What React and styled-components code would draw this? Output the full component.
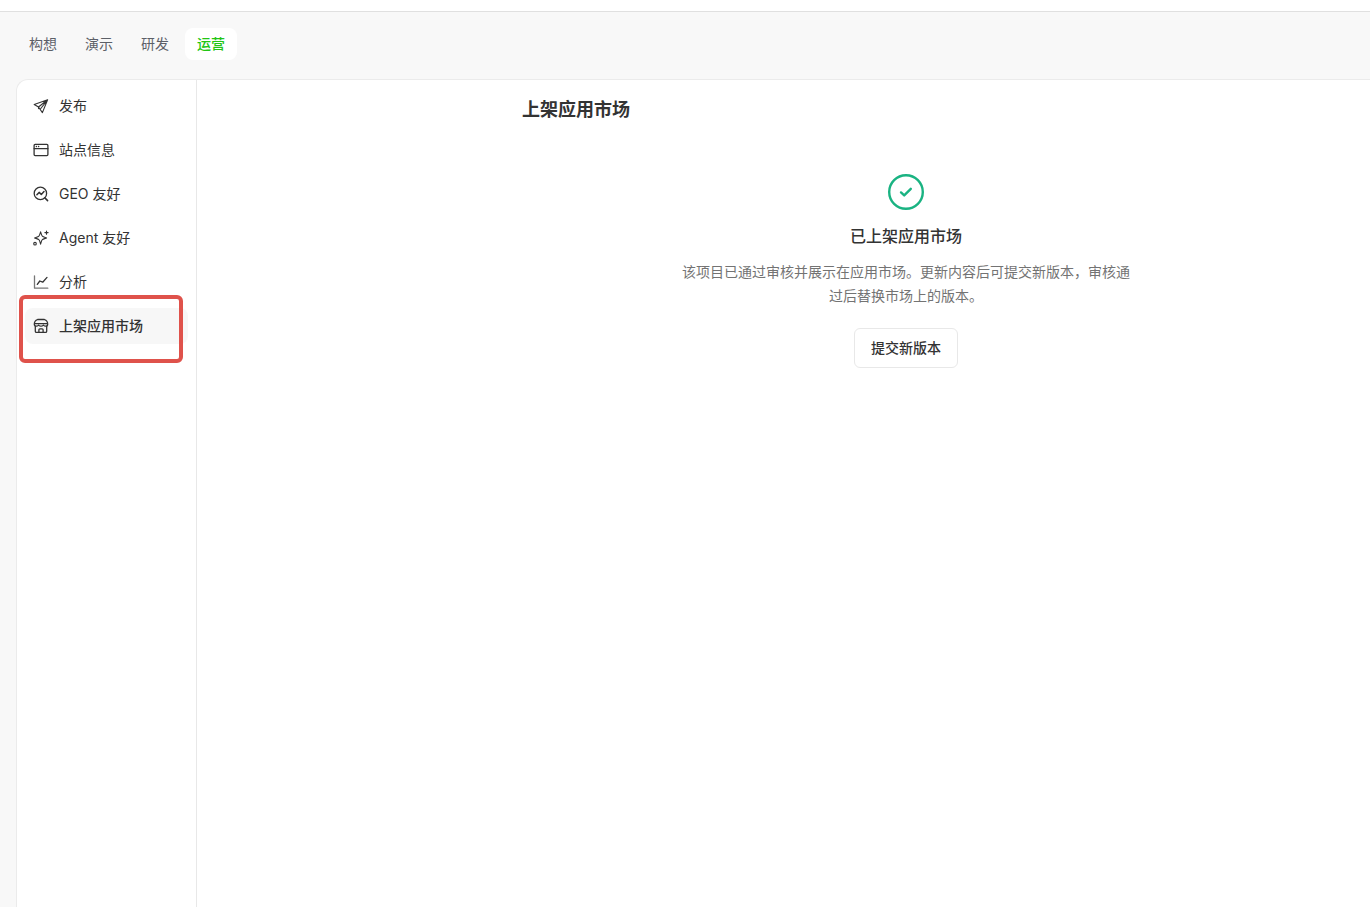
import React from 'react';
import styled, { createGlobalStyle } from 'styled-components';

const GlobalStyle = createGlobalStyle`
    * {
        box-sizing: border-box;
    }

    body {
        margin: 0;
        background: #f8f8f8;
        color: #333;
        font-family: Inter, "Noto Sans CJK SC", sans-serif;
        font-size: 14px;
        line-height: 20px;
    }
`

const Page = styled.div`
    min-height: 100vh;
    display: flex;
    flex-direction: column;
`

const TopBar = styled.header`
    height: 12px;
    background: #fff;
    border-bottom: 1px solid #e0e0e0;
`

const Tabs = styled.nav`
    display: flex;
    gap: 4px;
    padding: 16px 17px 19px;
`

const Tab = styled.button`
    height: 32px;
    padding: 0 12px;
    border: none;
    border-radius: 8px;
    background: ${props => props.$active ? '#fff' : 'none'};
    color: ${props => props.$active ? '#22c514' : '#5c6068'};
    font: inherit;
    font-weight: ${props => props.$active ? 500 : 400};
`

const Panel = styled.div`
    flex: 1;
    display: flex;
    margin-left: 16px;
    background: #fff;
    border: 1px solid #ebebeb;
    border-width: 1px 0 0 1px;
    border-top-left-radius: 12px;
`

const Sidebar = styled.nav`
    width: 180px;
    flex-shrink: 0;
    display: flex;
    flex-direction: column;
    gap: 8px;
    padding: 8px;
    border-right: 1px solid #e8e8e8;
`

const MenuItem = styled.a`
    position: relative;
    display: flex;
    align-items: center;
    gap: 10px;
    height: 36px;
    padding: 0 8px;
    border-radius: 8px;
    background: ${props => props.$active ? '#f7f7f7' : 'none'};
    color: #333;
    font-weight: ${props => props.$active ? 500 : 400};
    text-decoration: none;
`

const Highlight = styled.span`
    position: absolute;
    top: -13px;
    right: 5px;
    bottom: -19px;
    left: -6px;
    border: 4px solid #df524b;
    border-radius: 6px;
    pointer-events: none;
`

const Icon = styled.svg`
    width: 16px;
    height: 16px;
    flex-shrink: 0;
    fill: none;
    stroke: #333;
    stroke-width: 1.3;
    stroke-linecap: round;
    stroke-linejoin: round;
`

const Main = styled.main`
    flex: 1;
    padding: 16px 0 16px 245px;
`

const Content = styled.section`
    max-width: 768px;
    margin: 0 auto;
`

const Title = styled.h1`
    margin: 0;
    font-size: 18px;
    font-weight: 600;
    line-height: 28px;
`

const Status = styled.div`
    display: flex;
    flex-direction: column;
    align-items: center;
    padding-top: 48px;
    text-align: center;
`

const StatusIcon = styled.svg`
    width: 40px;
    height: 40px;
    fill: none;
    stroke: #1ab382;
    stroke-width: 2.4;
    stroke-linecap: round;
    stroke-linejoin: round;
`

const StatusTitle = styled.h2`
    margin: 12px 0;
    font-size: 16px;
    font-weight: 500;
    line-height: 24px;
`

const StatusText = styled.p`
    max-width: 448px;
    margin: 0 0 20px;
    color: #737373;
    line-height: 24px;
`

const SubmitButton = styled.button`
    height: 40px;
    padding: 0 16px;
    border: 1px solid #e8e8e8;
    border-radius: 6px;
    background: #fff;
    color: #333;
    font: inherit;
    font-weight: 500;
`

const tabs = ['构想', '演示', '研发', '运营'];

const menu = [
    {
        label: '发布',
        icon: <path d="M14.6 1.8 1.2 6.5l4.3 2.5 3.9 5.6ZM14.6 1.8 5.5 9v1.6M14.6 1.8 7.4 11" strokeWidth="1.1"/>
    },
    {
        label: '站点信息',
        icon: (
            <>
                <rect x="1.1" y="2.4" width="13.8" height="11.2" rx="1"/>
                <path d="M1.1 6.6h13.8M3.3 4.5h.2M5.5 4.5h.2"/>
            </>
        )
    },
    {
        label: 'GEO 友好',
        icon: (
            <>
                <circle cx="7.4" cy="7.4" r="6.2"/>
                <path d="m11.9 11.900 2.700 2.700M3.900 8.700l2.200-2.300 2.200 2 2.700-2.900" strokeWidth="1.5"/>
            </>
        )
    },
    {
        label: 'Agent 友好',
        icon: (
            <g strokeWidth="1.1">
                <path d="M7.6 1.900c.5 1.700.9 3.500 1.700 4.200.8.800 2.700 1.200 4.300 1.800-1.600.6-3.500 1-4.300 1.800-.8.700-1.200 2.700-1.700 4.400-.5-1.700-.9-3.700-1.700-4.400-.8-.8-2.700-1.200-4.300-1.800 1.600-.6 3.500-1 4.300-1.800.8-.7 1.200-2.500 1.700-4.200Z"/>
                <path d="M13.500 1v3.200M11.900 2.600h3.200"/>
                <circle cx="2" cy="13.700" r="1.300"/>
            </g>
        )
    },
    {
        label: '分析',
        icon: (
            <>
                <path d="M1.5 1.800v12.400h13.300" stroke="#777"/>
                <path d="m4.300 10.400 2.500-3.400 2.900 1.200 4.300-4.800"/>
            </>
        )
    },
    {
        label: '上架应用市场',
        icon: (
            <>
                <path d="M4.600 1.500h6.800c1.900.7 3.300 2.500 3.300 4.800 0 1.200-.9 1.900-2 1.900-1 0-1.700-.5-2.300-1.100-.6.600-1.400 1.100-2.400 1.100s-1.800-.5-2.400-1.100c-.6.600-1.300 1.100-2.300 1.100-1.100 0-2-.7-2-1.900 0-2.300 1.400-4.100 3.300-4.800ZM1.600 5.700h12.800"/>
                <path d="M2.300 8.200v5c0 .7.500 1.200 1.200 1.200h9c.7 0 1.200-.5 1.200-1.200v-5M5.900 14.400v-2.600c0-.6.400-1 1-1h2.200c.6 0 1 .4 1 1v2.600"/>
            </>
        )
    }
];

const App = () => {
    return (
        <Page>
            <GlobalStyle/>
            <TopBar/>
            <Tabs>
                {tabs.map(tab => (
                    <Tab key={tab} type="button" $active={tab === '运营'}>{tab}</Tab>
                ))}
            </Tabs>
            <Panel>
                <Sidebar>
                    {menu.map(({label, icon}) => {
                        const active = label === '上架应用市场';
                        return (
                            <MenuItem key={label} href="#" $active={active}>
                                <Icon viewBox="0 0 16 16" aria-hidden="true">{icon}</Icon>
                                {label}
                                {active && <Highlight/>}
                            </MenuItem>
                        )
                    })}
                </Sidebar>
                <Main>
                    <Content>
                        <Title>上架应用市场</Title>
                        <Status>
                            <StatusIcon viewBox="0 0 40 40" aria-hidden="true">
                                <circle cx="20" cy="20" r="16.8"/>
                                <path d="m15 20.400 3.200 3 6.600-6.600"/>
                            </StatusIcon>
                            <StatusTitle>已上架应用市场</StatusTitle>
                            <StatusText>
                                该项目已通过审核并展示在应用市场。更新内容后可提交新版本，审核通过后替换市场上的版本。
                            </StatusText>
                            <SubmitButton type="button">提交新版本</SubmitButton>
                        </Status>
                    </Content>
                </Main>
            </Panel>
        </Page>
    )
}

export default App;
